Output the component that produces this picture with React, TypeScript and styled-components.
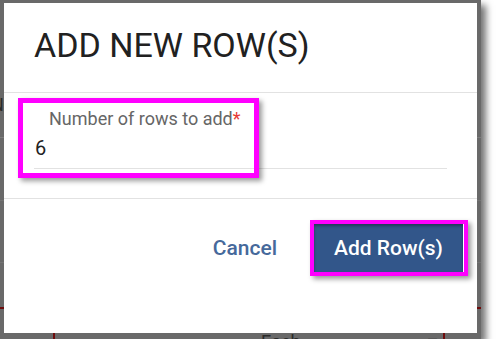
import React from 'react'
import styled, { createGlobalStyle } from 'styled-components'

const GlobalStyle = createGlobalStyle`
  html, body {
    margin: 0;
    padding: 0;
    background: #fff;
  }
  body {
    font-family: Roboto, 'Liberation Sans', sans-serif;
  }
`

const Screen = styled.div`
  position: relative;
  width: 481px;
  height: 339px;
  overflow: hidden;
  background: #696969;
  box-shadow: 5px 5px 7px rgba(0, 0, 0, 0.55);
`

// the dimmed page behind the dialog
const Page = styled.div`
  display: flex;
  flex-direction: column;
  height: 100%;
`

const PageRow = styled.div<{ $h: number; $line?: string; $lineW?: number }>`
  display: flex;
  justify-content: space-between;
  align-items: flex-start;
  height: ${p => p.$h}px;
  flex-shrink: 0;
  border-bottom: ${p => p.$lineW ?? 1}px solid ${p => p.$line ?? '#747474'};
`

const GhostText = styled.span<{ $top: number; $color?: string }>`
  margin-top: ${p => p.$top}px;
  font-size: 18px;
  color: ${p => p.$color ?? '#2c2c2c'};
`

const TableRow = styled.div`
  display: grid;
  grid-template-columns: 53px 390px 1fr;
  flex: 1;
`

const Cell = styled.div`
  border-left: 2px solid #6e0c0c;
  display: flex;
  justify-content: space-between;
  padding: 22px 6px 0 206px;
  font-size: 18px;
  color: #2a2a2a;
  &:first-child {
    border-left: none;
    padding: 0;
  }
`

const Modal = styled.div`
  position: absolute;
  left: 4px;
  top: 3px;
  width: 473px;
  height: 330px;
  background: #fff;
  display: flex;
  flex-direction: column;
`

const Header = styled.div`
  height: 90px;
  flex-shrink: 0;
  padding: 22px 30px 0;
  box-sizing: border-box;
  border-bottom: 1px solid #e2e2e2;
`

const Title = styled.h2`
  margin: 0;
  font-size: 34px;
  line-height: 40px;
  font-weight: 400;
  color: #212121;
`

const Body = styled.div`
  height: 106px;
  flex-shrink: 0;
  padding-top: 15px;
  box-sizing: border-box;
  border-bottom: 1px solid #e2e2e2;
`

const Field = styled.div`
  position: relative;
  margin: 0 30px;
`

const Label = styled.div`
  padding-left: 15px;
  font-size: 18px;
  line-height: 21px;
  color: #666;
`

const Required = styled.span`
  color: #e53935;
`

const Value = styled.div`
  margin-top: 7px;
  padding: 0 0 8px 1px;
  font-size: 20px;
  line-height: 24px;
  color: #222;
  border-bottom: 1px solid #e2e2e2;
`

const Footer = styled.div`
  flex: 1;
  display: flex;
  justify-content: flex-end;
  align-items: flex-start;
  padding: 25px 14px 0 0;
`

const Actions = styled.div`
  display: flex;
  align-items: center;
  gap: 37px;
`

const CancelButton = styled.button`
  border: none;
  background: none;
  padding: 0;
  font-family: inherit;
  font-size: 21px;
  font-weight: 500;
  color: #46699b;
`

const PrimaryButton = styled.button`
  position: relative;
  width: 149px;
  height: 48px;
  padding: 0;
  border: none;
  background: #32568a;
  box-shadow: inset 0 2px 3px rgba(0, 0, 0, 0.35);
  font-family: inherit;
  font-size: 21px;
  font-weight: 500;
  color: #fff;
`

// magenta annotation frames drawn over the screenshot
const Highlight = styled.div<{ $x: number; $y: number; $w: number; $h: number; $b: number }>`
  position: absolute;
  left: ${p => p.$x}px;
  top: ${p => p.$y}px;
  width: ${p => p.$w}px;
  height: ${p => p.$h}px;
  box-sizing: border-box;
  border: ${p => p.$b}px solid #ff00ff;
  box-shadow: 3px 3px 5px rgba(0, 0, 0, 0.4);
  pointer-events: none;
`

const App = () => (
  <>
    <GlobalStyle />
    <Screen>
      <Page>
        <PageRow $h={137} $line="#7c7c7c">
          <GhostText $top={94} style={{ marginLeft: -9 }}>N</GhostText>
        </PageRow>
        <PageRow $h={62}>
          <span />
          <GhostText $top={36} $color="#3b5f8e" style={{ marginRight: -4 }}>l</GhostText>
        </PageRow>
        <PageRow $h={61} />
        <PageRow $h={44} $line="#6e0c0c" $lineW={2} />
        <TableRow>
          <Cell />
          <Cell>
            <span>Each</span>
            <span>▾</span>
          </Cell>
          <Cell />
        </TableRow>
      </Page>
      <Modal>
        <Header>
          <Title>ADD NEW ROW(S)</Title>
        </Header>
        <Body>
          <Field>
            <Label>
              Number of rows to add<Required>*</Required>
            </Label>
            <Value>6</Value>
            <Highlight $x={-16} $y={-10} $w={241} $h={80} $b={5} />
          </Field>
        </Body>
        <Footer>
          <Actions>
            <CancelButton>Cancel</CancelButton>
            <PrimaryButton>
              Add Row(s)
              <Highlight $x={-4} $y={-4} $w={158} $h={56} $b={4} />
            </PrimaryButton>
          </Actions>
        </Footer>
      </Modal>
    </Screen>
  </>
)

export default App
